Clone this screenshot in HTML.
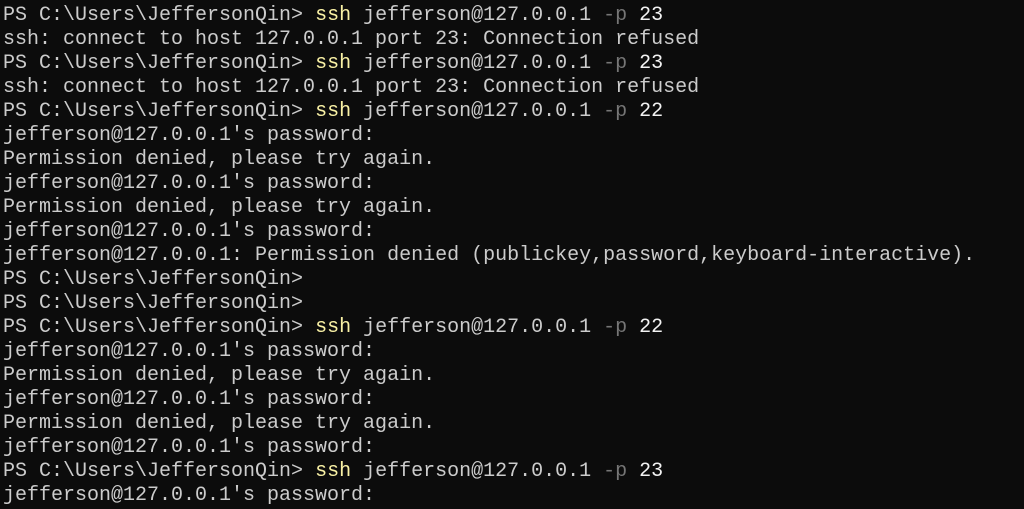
<!DOCTYPE html>
<html><head><meta charset="utf-8"><style>
html,body{margin:0;padding:0;background:#0c0c0c;width:1024px;height:509px;overflow:hidden}
pre{margin:0;padding:4px 0 0 3px;font-family:"Liberation Mono",monospace;font-size:20px;line-height:24px;color:#cccccc;white-space:pre}
.y{color:#f9f1a5}.g{color:#767676}.w{color:#f2f2f2}
</style></head><body><pre>PS C:\Users\JeffersonQin&gt; <span class="y">ssh</span> jefferson@127.0.0.1 <span class="g">-p</span> <span class="w">23</span>
ssh: connect to host 127.0.0.1 port 23: Connection refused
PS C:\Users\JeffersonQin&gt; <span class="y">ssh</span> jefferson@127.0.0.1 <span class="g">-p</span> <span class="w">23</span>
ssh: connect to host 127.0.0.1 port 23: Connection refused
PS C:\Users\JeffersonQin&gt; <span class="y">ssh</span> jefferson@127.0.0.1 <span class="g">-p</span> <span class="w">22</span>
jefferson@127.0.0.1's password:
Permission denied, please try again.
jefferson@127.0.0.1's password:
Permission denied, please try again.
jefferson@127.0.0.1's password:
jefferson@127.0.0.1: Permission denied (publickey,password,keyboard-interactive).
PS C:\Users\JeffersonQin&gt;
PS C:\Users\JeffersonQin&gt;
PS C:\Users\JeffersonQin&gt; <span class="y">ssh</span> jefferson@127.0.0.1 <span class="g">-p</span> <span class="w">22</span>
jefferson@127.0.0.1's password:
Permission denied, please try again.
jefferson@127.0.0.1's password:
Permission denied, please try again.
jefferson@127.0.0.1's password:
PS C:\Users\JeffersonQin&gt; <span class="y">ssh</span> jefferson@127.0.0.1 <span class="g">-p</span> <span class="w">23</span>
jefferson@127.0.0.1's password:</pre></body></html>
